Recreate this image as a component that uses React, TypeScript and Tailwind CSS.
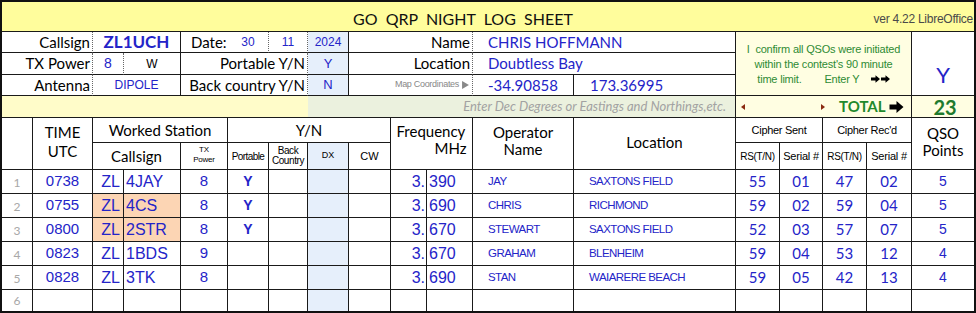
import React from "react";

const LATO = "font-['Lato',sans-serif]";
const ARIAL = "font-['Liberation_Sans',Arial,sans-serif]";
const BLUE = "text-[#2424c8]";
const cell = "flex items-center overflow-hidden whitespace-nowrap border-[#1a1a1a]";
const R = "border-r";
const RD = "border-r [border-right-style:dotted] border-r-[#666]";
const B = "border-b";

type Row = {
  n: string; t: string; zl: string; c: string; p: string; port: string;
  f1: string; f2: string; name: string; loc: string;
  rs1: string; s1: string; rs2: string; s2: string; pts: string; hl?: boolean;
};

const rows: Row[] = [
  { n: "1", t: "0738", zl: "ZL", c: "4JAY", p: "8", port: "Y", f1: "3.", f2: "390", name: "JAY", loc: "SAXTONS FIELD", rs1: "55", s1: "01", rs2: "47", s2: "02", pts: "5" },
  { n: "2", t: "0755", zl: "ZL", c: "4CS", p: "8", port: "Y", f1: "3.", f2: "690", name: "CHRIS", loc: "RICHMOND", rs1: "59", s1: "02", rs2: "59", s2: "04", pts: "5", hl: true },
  { n: "3", t: "0800", zl: "ZL", c: "2STR", p: "8", port: "Y", f1: "3.", f2: "670", name: "STEWART", loc: "SAXTONS FIELD", rs1: "52", s1: "03", rs2: "57", s2: "07", pts: "5", hl: true },
  { n: "4", t: "0823", zl: "ZL", c: "1BDS", p: "9", port: "", f1: "3.", f2: "670", name: "GRAHAM", loc: "BLENHEIM", rs1: "59", s1: "04", rs2: "53", s2: "12", pts: "4" },
  { n: "5", t: "0828", zl: "ZL", c: "3TK", p: "8", port: "", f1: "3.", f2: "690", name: "STAN", loc: "WAIARERE BEACH", rs1: "59", s1: "05", rs2: "42", s2: "13", pts: "4" },
  { n: "6", t: "", zl: "", c: "", p: "", port: "", f1: "", f2: "", name: "", loc: "", rs1: "", s1: "", rs2: "", s2: "", pts: "" },
];

function Arrow({ w, h, className }: { w: number; h: number; className?: string }) {
  return (
    <svg width={w} height={h} viewBox="0 0 14 12" className={className}>
      <polygon points="0,3.5 7,3.5 7,0 14,6 7,12 7,8.5 0,8.5" fill="#000" />
    </svg>
  );
}

export default function App() {
  return (
    <div className="w-[976px] h-[313px] bg-white">
      <div
        className={`w-[976px] h-[313px] border-2 border-[#111] grid grid-cols-[31px_60px_31px_57px_47px_41px_39px_41px_42px_36px_46px_101px_162px_44px_43px_44px_45px_62px] grid-rows-[30px_21px_22px_21px_22px_25px_27px_24px_24px_24px_24px_24px_21px] text-black`}
      >
        {/* Title */}
        <div className={`${cell} col-span-18 ${B} bg-[#fffd9c]`}>
          <span className={`${LATO} text-[16px] ml-[351px] pt-[5px] whitespace-pre text-[#111]`}>GO  QRP  NIGHT  LOG  SHEET</span>
          <span className={`${ARIAL} text-[12px] tracking-[-0.25px] ml-auto mr-[1px] pt-[4px] text-[#4a4a4a]`}>ver 4.22 LibreOffice</span>
        </div>

        {/* Row 1 */}
        <div className={`${cell} col-span-2 ${RD} ${B} justify-end pr-[2px] ${LATO} text-[15px]`}>Callsign</div>
        <div className={`${cell} col-span-2 ${R} ${B} justify-center ${LATO} font-bold text-[17px] ${BLUE}`}>ZL1UCH</div>
        <div className={`${cell} ${B} pl-[10px] ${LATO} text-[15px]`}>Date:</div>
        <div className={`${cell} ${RD} ${B} justify-center ${ARIAL} text-[12px] ${BLUE}`}>30</div>
        <div className={`${cell} ${RD} ${B} justify-center ${ARIAL} text-[12px] ${BLUE}`}>11</div>
        <div className={`${cell} ${R} ${B} justify-center ${ARIAL} text-[12px] ${BLUE} bg-[#e6effb]`}>2024</div>
        <div className={`${cell} col-span-3 ${RD} ${B} justify-end pr-[2px] ${LATO} text-[15px]`}>Name</div>
        <div className={`${cell} col-span-2 ${R} ${B} pl-[15px] ${LATO} text-[15px] ${BLUE}`}>CHRIS HOFFMANN</div>
        <div className={`${cell} col-span-4 row-span-3 ${R} ${B} bg-[#fffee2] flex-col justify-center whitespace-pre ${ARIAL} text-[11px] tracking-[-0.2px] leading-[15px] text-[#2e8b34] pt-[1px]`}>
          <span>I  confirm all QSOs were initiated</span>
          <span>within the contest's 90 minute</span>
          <span className="flex items-center">
            <span>time limit.        Enter Y    </span>
            <Arrow w={9} h={8} />
            <Arrow w={9} h={8} className="ml-[1px]" />
          </span>
        </div>
        <div className={`${cell} row-span-3 ${B} justify-center pt-[22px] ${LATO} text-[22px] ${BLUE}`}>Y</div>

        {/* Row 2 */}
        <div className={`${cell} col-span-2 ${RD} ${B} justify-end pr-[2px] ${LATO} text-[15px]`}>TX Power</div>
        <div className={`${cell} ${RD} ${B} justify-center ${ARIAL} text-[14px] ${BLUE}`}>8</div>
        <div className={`${cell} ${R} ${B} justify-center ${ARIAL} text-[12px]`}>W</div>
        <div className={`${cell} col-span-3 ${RD} ${B} justify-end pr-[2px] ${LATO} text-[15px]`}>Portable Y/N</div>
        <div className={`${cell} ${R} ${B} justify-center ${ARIAL} text-[13px] ${BLUE} bg-[#e6effb]`}>Y</div>
        <div className={`${cell} col-span-3 ${RD} ${B} justify-end pr-[2px] ${LATO} text-[15px]`}>Location</div>
        <div className={`${cell} col-span-2 ${R} ${B} pl-[15px] ${LATO} text-[15px] ${BLUE}`}>Doubtless Bay</div>

        {/* Row 3 */}
        <div className={`${cell} col-span-2 ${RD} ${B} justify-end pr-[2px] ${LATO} text-[15px]`}>Antenna</div>
        <div className={`${cell} col-span-2 ${R} ${B} justify-center ${ARIAL} text-[12px] ${BLUE}`}>DIPOLE</div>
        <div className={`${cell} col-span-3 ${RD} ${B} justify-end pr-[2px] ${LATO} text-[15px]`}>Back country Y/N</div>
        <div className={`${cell} ${R} ${B} justify-center ${ARIAL} text-[13px] ${BLUE} bg-[#e6effb]`}>N</div>
        <div className={`${cell} col-span-3 ${RD} ${B} justify-end pr-[3px] ${ARIAL} text-[9px] tracking-[-0.3px] text-[#888]`}>
          <span>Map Coordinates</span>
          <svg width="7" height="8" viewBox="0 0 6 7" className="ml-[3px]">
            <polygon points="0,0 6,3.5 0,7" fill="#888" />
          </svg>
        </div>
        <div className={`${cell} ${R} ${B} justify-center ${LATO} text-[15px] ${BLUE}`}>-34.90858</div>
        <div className={`${cell} ${R} ${B} pl-[16px] ${LATO} text-[15px] ${BLUE}`}>173.36995</div>

        {/* Row 4 */}
        <div className={`${cell} col-span-7 ${B} bg-[#fffcc9]`} />
        <div className={`${cell} col-span-6 ${R} ${B} bg-[#ebf1de] justify-end pr-[9px] ${LATO} italic text-[13px] text-[#a2a2a2]`}>Enter Dec Degrees or Eastings and Northings,etc.</div>
        <div className={`${cell} col-span-4 ${R} ${B} bg-[#fffee2]`}>
          <svg width="4" height="6" viewBox="0 0 4 6" className="ml-[5px]">
            <polygon points="4,0 0,3 4,6" fill="#8a2a10" />
          </svg>
          <svg width="4" height="6" viewBox="0 0 4 6" className="ml-[76px]">
            <polygon points="0,0 4,3 0,6" fill="#8a2a10" />
          </svg>
          <span className={`ml-[14px] ${LATO} font-bold text-[15px] text-[#1f8a2c]`}>TOTAL</span>
          <Arrow w={15} h={12} className="ml-[3px]" />
        </div>
        <div className={`flex items-center whitespace-nowrap border-[#1a1a1a] ${B} bg-[#fffee2] justify-center pl-[4px] ${LATO} font-bold text-[20px] leading-[20px] text-[#207a2e]`}>
          <span className="leading-[20px]">23</span>
        </div>

        {/* Table header row a */}
        <div className={`${cell} row-span-2 ${R} ${B}`} />
        <div className={`${cell} row-span-2 ${R} ${B} flex-col justify-center ${LATO} text-[15px] leading-[19px] pb-[3px]`}>
          <span>TIME</span>
          <span>UTC</span>
        </div>
        <div className={`${cell} col-span-3 ${R} ${B} justify-center ${LATO} text-[15px]`}>Worked Station</div>
        <div className={`${cell} col-span-4 ${R} ${B} justify-center ${LATO} text-[15px]`}>Y/N</div>
        <div className={`${cell} col-span-2 row-span-2 ${R} ${B} flex-col justify-center ${LATO} text-[15px] leading-[17px] pb-[8px]`}>
          <span className="w-[70px] text-left">Frequency</span>
          <span className="w-[70px] text-right">MHz</span>
        </div>
        <div className={`${cell} row-span-2 ${R} ${B} flex-col justify-center ${LATO} text-[15px] leading-[17px] pb-[6px]`}>
          <span>Operator</span>
          <span>Name</span>
        </div>
        <div className={`${cell} row-span-2 ${R} ${B} justify-center ${LATO} text-[15px] pb-[2px]`}>Location</div>
        <div className={`${cell} col-span-2 ${R} ${B} justify-center ${ARIAL} text-[11px] tracking-[-0.3px]`}>Cipher Sent</div>
        <div className={`${cell} col-span-2 ${R} ${B} justify-center ${ARIAL} text-[11px] tracking-[-0.3px]`}>Cipher Rec'd</div>
        <div className={`${cell} row-span-2 ${B} flex-col justify-center ${LATO} text-[15px] leading-[17px] pb-[4px]`}>
          <span>QSO</span>
          <span>Points</span>
        </div>

        {/* Table header row b */}
        <div className={`${cell} col-span-2 ${R} ${B} justify-center ${LATO} text-[15px]`}>Callsign</div>
        <div className={`${cell} ${R} ${B} flex-col justify-center ${ARIAL} text-[8px] tracking-[-0.2px] leading-[10px] pb-[2px]`}>
          <span>TX</span>
          <span>Power</span>
        </div>
        <div className={`${cell} ${R} ${B} justify-center ${ARIAL} text-[10px] tracking-[-0.6px]`}>Portable</div>
        <div className={`${cell} ${R} ${B} flex-col justify-center ${ARIAL} text-[10px] tracking-[-0.4px] leading-[10px]`}>
          <span>Back</span>
          <span>Country</span>
        </div>
        <div className={`${cell} ${R} ${B} justify-center ${ARIAL} text-[9px] bg-[#e6effb]`}>DX</div>
        <div className={`${cell} ${R} ${B} justify-center ${ARIAL} text-[11px]`}>CW</div>
        <div className={`${cell} ${R} ${B} justify-center ${ARIAL} text-[10px] tracking-[-0.3px]`}>RS(T/N)</div>
        <div className={`${cell} ${R} ${B} justify-center ${ARIAL} text-[11px] tracking-[-0.2px]`}>Serial #</div>
        <div className={`${cell} ${R} ${B} justify-center ${ARIAL} text-[10px] tracking-[-0.3px]`}>RS(T/N)</div>
        <div className={`${cell} ${R} ${B} justify-center ${ARIAL} text-[11px] tracking-[-0.2px]`}>Serial #</div>

        {/* Data rows */}
        {rows.map((r, i) => {
          const bb = i < rows.length - 1 ? B : "";
          const hl = r.hl ? "bg-[#fcd5b4]" : "";
          return (
            <React.Fragment key={i}>
              <div className={`${cell} ${R} ${bb} justify-center items-end pb-[1px] ${LATO} text-[12px] text-[#a8a8a8]`}>{r.n}</div>
              <div className={`${cell} ${R} ${bb} justify-center ${ARIAL} text-[15px] ${BLUE}`}>{r.t}</div>
              <div className={`${cell} ${R} ${bb} justify-end pr-[3px] ${ARIAL} text-[16px] ${BLUE} ${hl}`}>{r.zl}</div>
              <div className={`${cell} ${R} ${bb} pl-[2px] ${ARIAL} text-[16px] ${BLUE} ${hl}`}>{r.c}</div>
              <div className={`${cell} ${R} ${bb} justify-center ${ARIAL} text-[15px] ${BLUE}`}>{r.p}</div>
              <div className={`${cell} ${R} ${bb} justify-center ${ARIAL} font-bold text-[14px] ${BLUE}`}>{r.port}</div>
              <div className={`${cell} ${R} ${bb}`} />
              <div className={`${cell} ${R} ${bb} bg-[#e6effb]`} />
              <div className={`${cell} ${R} ${bb}`} />
              <div className={`${cell} ${R} ${bb} justify-end pr-[1px] ${ARIAL} text-[16px] ${BLUE}`}>{r.f1}</div>
              <div className={`${cell} ${R} ${bb} pl-[2px] ${ARIAL} text-[16px] ${BLUE}`}>{r.f2}</div>
              <div className={`${cell} ${R} ${bb} pl-[15px] ${ARIAL} text-[11.5px] tracking-[-0.55px] ${BLUE}`}>{r.name}</div>
              <div className={`${cell} ${R} ${bb} pl-[15px] ${ARIAL} text-[11.5px] tracking-[-0.55px] ${BLUE}`}>{r.loc}</div>
              <div className={`${cell} ${R} ${bb} justify-center ${LATO} text-[15px] ${BLUE}`}>{r.rs1}</div>
              <div className={`${cell} ${R} ${bb} justify-center ${LATO} text-[15px] ${BLUE}`}>{r.s1}</div>
              <div className={`${cell} ${R} ${bb} justify-center ${LATO} text-[15px] ${BLUE}`}>{r.rs2}</div>
              <div className={`${cell} ${R} ${bb} justify-center ${LATO} text-[15px] ${BLUE}`}>{r.s2}</div>
              <div className={`${cell} ${bb} justify-center ${ARIAL} text-[14px] ${BLUE}`}>{r.pts}</div>
            </React.Fragment>
          );
        })}
      </div>
    </div>
  );
}
